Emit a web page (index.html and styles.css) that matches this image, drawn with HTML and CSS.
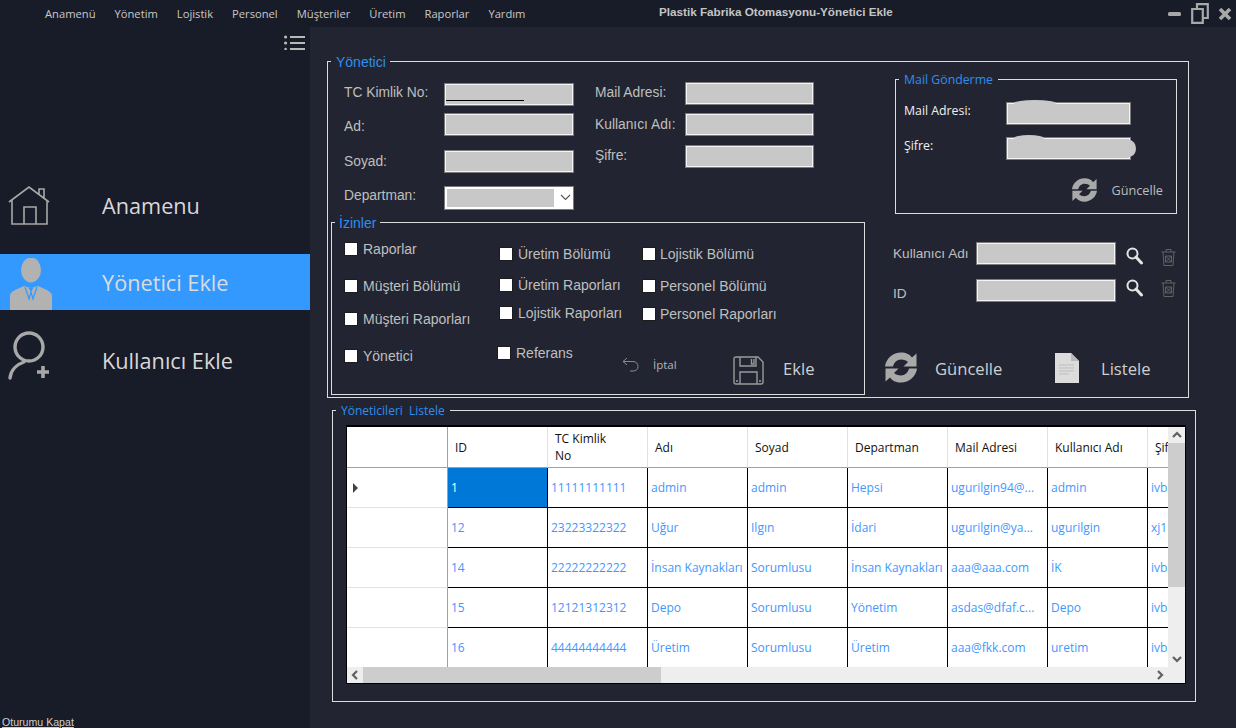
FILE: index.html
```html
<!DOCTYPE html>
<html lang="tr">
<head>
<meta charset="utf-8">
<title>Plastik Fabrika Otomasyonu-Yönetici Ekle</title>
<link rel="stylesheet" href="styles.css">
</head>
<body>
<div class="app">
  <header class="topbar">
    <nav class="menu">
      <span>Anamenü</span><span>Yönetim</span><span>Lojistik</span><span>Personel</span><span>Müşteriler</span><span>Üretim</span><span>Raporlar</span><span>Yardım</span>
    </nav>
    <div class="title">Plastik Fabrika Otomasyonu-Yönetici Ekle</div>
    <div class="winctl">
      <svg class="min" width="13" height="6" viewBox="0 0 13 6"><rect x="0" y="1" width="13" height="4" rx="1.5" fill="#a8a8a8"/></svg>
      <svg class="res" width="18" height="21" viewBox="0 0 18 21"><path d="M6 5V1.2H16.8V15H12M1.2 6H11.8V19.8H1.2Z" fill="none" stroke="#a8a8a8" stroke-width="2.2"/></svg>
      <svg class="cls" width="14" height="14" viewBox="0 0 14 14"><path d="M2 2L12 12M12 2L2 12" stroke="#a8a8a8" stroke-width="3.6"/></svg>
    </div>
  </header>

  <aside class="sidebar">
    <div class="burger">
      <svg width="21" height="15" viewBox="0 0 21 15"><g fill="#b8b8b8"><circle cx="1.6" cy="2" r="1.6"/><circle cx="1.6" cy="8" r="1.6"/><circle cx="1.6" cy="14" r="1.3"/><rect x="6" y="1" width="15" height="2"/><rect x="6" y="7" width="15" height="2"/><rect x="6" y="13" width="15" height="2"/></g></svg>
    </div>
    <a class="nav nav-home">
      <svg class="nav-ico" width="44" height="42" viewBox="0 0 44 42"><path d="M1 17L21 2L41 17M4 15V39H39V15M16 39V22H28V39M31 9V4H36V13" fill="none" stroke="#a8a8a8" stroke-width="1.6"/></svg>
      <span>Anamenu</span>
    </a>
    <a class="nav nav-active">
      <svg class="nav-ico" width="44" height="52" viewBox="0 0 44 52"><g fill="#b2b2b2"><ellipse cx="21" cy="12" rx="10" ry="12.5"/><path d="M0 52V38C0 33 6 32 14 28L21 30L28 28C36 32 42 33 42 38V52Z"/></g><path d="M15 29L19 41L21 34L23 41L27 29" fill="none" stroke="#39f" stroke-width="1.2"/><path d="M18.500 29.500H23.500L21 34Z" fill="#39f"/></svg>
      <span>Yönetici Ekle</span>
    </a>
    <a class="nav nav-user">
      <svg class="nav-ico" width="44" height="50" viewBox="0 0 44 50"><g fill="none" stroke="#a8a8a8" stroke-linecap="round"><circle cx="21" cy="16" r="14" stroke-width="3.4"/><path d="M2 47C3 38 10 33 16 31" stroke-width="3.400"/><path d="M29 41H41M35 35V47" stroke-width="3.600" stroke-linecap="butt"/></g></svg>
      <span>Kullanıcı Ekle</span>
    </a>
    <a class="logout">Oturumu Kapat</a>
  </aside>

  <main class="main">
    <section class="group g-admin">
      <div class="legend lg-admin">Yönetici</div>
      <div class="admin-left">
        <div class="personal">
          <div class="pcol pcol-a">
            <div class="field"><label class="lbl-a up4">TC Kimlik No:</label><input class="inp w130 tc"></div>
            <div class="field mt7"><label class="lbl-a down3">Ad:</label><input class="inp w130"></div>
            <div class="field mt14"><label class="lbl-a">Soyad:</label><input class="inp w130"></div>
            <div class="field mt13"><label class="lbl-a up4">Departman:</label>
              <div class="select"><span class="select-fill"></span><svg width="11" height="7" viewBox="0 0 11 7"><path d="M1 1L5.500 5.500L10 1" fill="none" stroke="#555" stroke-width="1.100"/></svg></div>
            </div>
          </div>
          <div class="pcol pcol-b">
            <div class="field"><label class="lbl-b up2">Mail Adresi:</label><input class="inp w129"></div>
            <div class="field mt8"><label class="lbl-b">Kullanıcı Adı:</label><input class="inp w129"></div>
            <div class="field mt9"><label class="lbl-b up2">Şifre:</label><input class="inp w129"></div>
          </div>
        </div>

        <section class="group g-perm">
          <div class="legend lg-perm">İzinler</div>
          <div class="pc pc1">
            <label class="chk"><input type="checkbox">Raporlar</label>
            <label class="chk mt21"><input type="checkbox">Müşteri Bölümü</label>
            <label class="chk mt17"><input type="checkbox">Müşteri Raporları</label>
            <label class="chk mt21"><input type="checkbox">Yönetici</label>
          </div>
          <div class="pc pc2">
            <label class="chk"><input type="checkbox">Üretim Bölümü</label>
            <label class="chk mt15"><input type="checkbox">Üretim Raporları</label>
            <label class="chk mt12"><input type="checkbox">Lojistik Raporları</label>
            <label class="chk mt24 shift"><input type="checkbox">Referans</label>
          </div>
          <div class="pc pc3">
            <label class="chk in20"><input type="checkbox">Lojistik Bölümü</label>
            <label class="chk in20 mt16"><input type="checkbox">Personel Bölümü</label>
            <label class="chk in20 mt12"><input type="checkbox">Personel Raporları</label>
            <div class="actions">
              <div class="cancel">
                <svg width="17" height="15" viewBox="0 0 17 15"><path d="M5 1L1 4.500L5 8M1 4.500H11C14 4.500 16 6.500 16 9.500C16 12.500 14 14 11 14H8" fill="none" stroke="#8a8a8a" stroke-width="1"/></svg>
                <span>İptal</span>
              </div>
              <svg class="save" width="31" height="29" viewBox="0 0 31 29"><path d="M1 3Q1 1 3 1H25L30 6V26Q30 28 28 28H3Q1 28 1 26ZM7 1V10H23V1M7 28V16H24V28M18.500 3V8H21V3" fill="none" stroke="#9a9a9a" stroke-width="1.400"/><path d="M3 25H5M26 25H28" stroke="#9a9a9a" stroke-width="1.400"/></svg>
              <span class="btn-text">Ekle</span>
            </div>
          </div>
        </section>
      </div>

      <div class="admin-right">
        <section class="group g-mail">
          <div class="legend lg-mail">Mail Gönderme</div>
          <div class="mfield"><label>Mail Adresi:</label><span class="redact r1"><input class="inp w124"></span></div>
          <div class="mfield mt12"><label>Şifre:</label><span class="redact r2"><input class="inp w124"></span></div>
          <div class="mupdate">
            <svg width="25" height="26" viewBox="0 0 32 32"><use href="#sync"/></svg>
            <span>Güncelle</span>
          </div>
        </section>

        <div class="sfield s1">
          <label>Kullanıcı Adı</label><input class="inp w139">
          <svg class="search" width="17" height="18" viewBox="0 0 17 18"><use href="#mag"/></svg>
          <svg class="trash" width="15" height="18" viewBox="0 0 15 18"><use href="#bin"/></svg>
        </div>
        <div class="sfield s2">
          <label>ID</label><input class="inp w139">
          <svg class="search" width="17" height="18" viewBox="0 0 17 18"><use href="#mag"/></svg>
          <svg class="trash" width="15" height="18" viewBox="0 0 15 18"><use href="#bin"/></svg>
        </div>

        <div class="bigbtns">
          <svg width="32" height="33" viewBox="0 0 32 32"><use href="#sync"/></svg>
          <span class="btn-text bt1">Güncelle</span>
          <svg class="docico" width="24" height="30" viewBox="0 0 24 30"><path d="M0 0H16L24 8V30H0Z" fill="#dcdcdc"/><path d="M16 0L24 8H16Z" fill="#b9b9b9"/><path d="M4 12H19M4 15H19M4 18H19M4 21H14" stroke="#bdbdbd" stroke-width="1"/></svg>
          <span class="btn-text bt2">Listele</span>
        </div>
      </div>
    </section>

    <section class="group g-list">
      <div class="legend lg-list">Yöneticileri&nbsp; Listele</div>
      <div class="grid">
        <div class="grid-top">
          <div class="viewport">
            <table class="dgv">
              <thead>
                <tr><th class="rh"></th><th>ID</th><th>TC Kimlik<br>No</th><th>Adı</th><th>Soyad</th><th>Departman</th><th>Mail Adresi</th><th>Kullanıcı Adı</th><th>Şifre</th></tr>
              </thead>
              <tbody>
                <tr><td class="rh"><span class="caret"></span></td><td class="sel">1</td><td>11111111111</td><td>admin</td><td>admin</td><td>Hepsi</td><td>ugurilgin94@...</td><td>admin</td><td>ivbk</td></tr>
                <tr><td class="rh"></td><td>12</td><td>23223322322</td><td>Uğur</td><td>Ilgın</td><td>İdari</td><td>ugurilgin@ya...</td><td>ugurilgin</td><td>xj1k</td></tr>
                <tr><td class="rh"></td><td>14</td><td>22222222222</td><td>İnsan Kaynakları</td><td>Sorumlusu</td><td>İnsan Kaynakları</td><td>aaa@aaa.com</td><td>İK</td><td>ivbk</td></tr>
                <tr><td class="rh"></td><td>15</td><td>12121312312</td><td>Depo</td><td>Sorumlusu</td><td>Yönetim</td><td>asdas@dfaf.c...</td><td>Depo</td><td>ivbk</td></tr>
                <tr><td class="rh"></td><td>16</td><td>44444444444</td><td>Üretim</td><td>Sorumlusu</td><td>Üretim</td><td>aaa@fkk.com</td><td>uretim</td><td>ivbk</td></tr>
              </tbody>
            </table>
          </div>
          <div class="vbar">
            <svg class="arr" width="16" height="16" viewBox="0 0 16 16"><path d="M4 10L8 6L12 10" fill="none" stroke="#606060" stroke-width="2.200"/></svg>
            <div class="vthumb"></div>
            <svg class="arr arr-end" width="16" height="16" viewBox="0 0 16 16"><path d="M4 6L8 10L12 6" fill="none" stroke="#606060" stroke-width="2.200"/></svg>
          </div>
        </div>
        <div class="hbar">
          <svg class="arr" width="16" height="16" viewBox="0 0 16 16"><path d="M10 4L6 8L10 12" fill="none" stroke="#606060" stroke-width="2.200"/></svg>
          <div class="hthumb"></div>
          <svg class="arr arr-end" width="16" height="16" viewBox="0 0 16 16"><path d="M6 4L10 8L6 12" fill="none" stroke="#606060" stroke-width="2.200"/></svg>
        </div>
      </div>
    </section>
  </main>
</div>

<svg class="defs" width="0" height="0">
  <defs>
    <g id="sync" fill="#a9a9a9">
      <path d="M0 15C1 7 8 1 16 1C21 1 25 3 27 6L31.500 2V15H18.500L23 10.500C21.500 9 19 8 16 8C12 8 9 11 8 15Z"/>
      <path d="M32 17C31 25 24 31 16 31C11 31 7 29 5 26L0.500 30V17H13.500L9 21.500C10.500 23 13 24 16 24C20 24 23 21 24 17Z"/>
    </g>
    <g id="mag">
      <circle cx="6.500" cy="6.500" r="5" fill="none" stroke="#e4e4e4" stroke-width="2"/>
      <path d="M10 10L15.500 16" stroke="#e4e4e4" stroke-width="3" stroke-linecap="round"/>
    </g>
    <g id="bin" fill="none" stroke="#626262" stroke-width="1">
      <path d="M0.500 4H14.500M5 4V1.500H10V4M2 4L3 17.500H12L13 4M4.500 8H10.500V14H4.500ZM4.500 8L10.500 14M10.500 8L4.500 14"/>
    </g>
  </defs>
</svg>
</body>
</html>
```
FILE: styles.css
```css
* { box-sizing: border-box; }
html, body { margin: 0; padding: 0; }
body { width: 1236px; height: 728px; overflow: hidden; background: #222531; font-family: "Liberation Sans", Arial, sans-serif; }
.defs { position: absolute; }
svg { display: block; flex: none; }

.app { display: grid; grid-template-columns: 310px 926px; grid-template-rows: 27px 701px; width: 1236px; height: 728px; }

/* top bar */
.topbar { grid-column: 1 / 3; display: flex; align-items: center; background: #181b28; position: relative; }
.menu { display: flex; gap: 19px; margin-left: 45px; font: 11.2px/15px "Open Sans", sans-serif; color: #c9c9c9; width: 614px; margin-top: -1px; }
.title { font: bold 11.7px/14px "Liberation Sans", sans-serif; color: #c4c4c4; width: 509px; margin-top: -3px; white-space: nowrap; }
.winctl { display: flex; align-items: center; }
.res { margin-left: 10px; }
.cls { margin-left: 9px; }

/* sidebar */
.sidebar { background: #181b28; display: flex; flex-direction: column; }
.burger { display: flex; justify-content: flex-end; padding: 8px 5px 0 0; height: 143px; }
.nav { display: flex; align-items: center; font: 21.7px/30px "Open Sans", sans-serif; color: #d8d8d8; padding-left: 8px; }
.nav span { margin-left: 50px; }
.nav-home { height: 84px; padding-bottom: 12px; }
.nav-active { height: 56px; background: #39f; color: #dcdcdc; align-items: flex-end; padding-left: 10px; }
.nav-active span { align-self: center; margin-left: 48px; padding-top: 2px; }
.nav-user { height: 78px; padding-top: 24px; }
.nav-user .nav-ico { margin-top: -10px; }
.logout { margin-top: auto; margin-left: 2px; font: 10.6px/12px "Liberation Sans", sans-serif; color: #cfcfcf; text-decoration: underline; height: 12px; width: 72px; white-space: nowrap; }

/* main */
.main { padding: 34px 0 0 17px; }
.group { position: relative; border: 1px solid #dcdcdc; }
.legend { position: absolute; left: 4px; top: -9px; padding: 0 4px; background: #222531; color: #2e8eee; white-space: nowrap; }
.lg-admin { font: 14px/16px "Liberation Sans", sans-serif; top: -8px; left: 3px; padding: 0 4px 0 5px; }
.lg-perm { font: 14px/16px "Liberation Sans", sans-serif; top: -8px; left: 3px; padding: 0 4px; }
.lg-mail { font: 12.3px/18px "Open Sans", sans-serif; left: 3px; padding: 0 5px; }
.lg-list { font: 12px/16px "Open Sans", sans-serif; top: -8px; left: 3px; padding: 0 5px; }

.g-admin { display: flex; width: 862px; height: 337px; }
.admin-left { margin-left: 3px; width: 534px; }
.personal { display: flex; height: 160px; padding: 20px 0 0 13px; }
.pcol-a { width: 251px; padding-top: 1px; }
.field { display: flex; align-items: center; height: 23px; font-size: 13.8px; color: #bfbfbf; }
.lbl-a { width: 100px; }
.lbl-b { width: 90px; white-space: nowrap; }
.up2 { padding-bottom: 2px; }
.up4 { padding-bottom: 4px; }
.down3 { padding-top: 3px; }
.mt7 { margin-top: 7px; }
.mt8 { margin-top: 8px; }
.mt9 { margin-top: 9px; }
.mt12 { margin-top: 12px; }
.mt13 { margin-top: 13px; }
.mt14 { margin-top: 14px; }
.mt15 { margin-top: 15px; }
.mt16 { margin-top: 16px; }
.mt17 { margin-top: 17px; }
.mt21 { margin-top: 21px; }
.mt24 { margin-top: 24px; }

.inp { display: block; height: 23px; margin: 0; padding: 0; background: #c8c8c8; border: 1px solid #7a7a7a; box-shadow: inset 0 0 0 1px #f4f4f4; border-radius: 0; outline: 0; }
.w130 { width: 130px; }
.w129 { width: 129px; }
.w124 { width: 125px; }
.w139 { width: 140px; }
.tc { background-image: linear-gradient(#000, #000); background-repeat: no-repeat; background-size: 78px 1px; background-position: 1px 16px; }
.select { display: flex; align-items: center; width: 130px; height: 24px; background: #fff; border: 1px solid #7a7a7a; padding: 1px 0 1px 2px; }
.select-fill { width: 107px; height: 18px; background: #c8c8c8; }
.select svg { margin-left: 6px; }

/* permissions */
.g-perm { display: flex; width: 534px; height: 173px; padding-left: 12px; }
.pc { padding-top: 18px; }
.pc1 { width: 155px; }
.pc2 { width: 123px; padding-top: 23px; }
.pc3 { width: 242px; padding-top: 23px; }
.chk { display: flex; align-items: center; height: 16px; font-size: 14px; color: #bfbfbf; white-space: nowrap; }
.chk input { appearance: none; -webkit-appearance: none; width: 14px; height: 14px; margin: 0 5px 0 0; background: #fff; border: 1px solid #1c1c1c; border-radius: 0; flex: none; }
.in20 { margin-left: 20px; }
.pc3 .chk input { margin-right: 4px; }
.pc2 .chk.shift input { margin-left: -2px; }
.actions { display: flex; align-items: center; margin-top: 34px; }
.cancel { display: flex; align-items: center; gap: 14px; font: 11.5px/14px "Open Sans", sans-serif; color: #b4b4b4; width: 111px; padding-bottom: 12px; }
.btn-text { font: 16.6px/22px "Open Sans", sans-serif; color: #cfcfcf; }
.actions .btn-text { margin-left: 19px; padding-bottom: 3px; }

/* right column */
.admin-right { margin-left: 20px; width: 300px; padding-top: 17px; }
.g-mail { width: 282px; height: 135px; margin-left: 10px; padding: 22px 0 0 8px; }
.mfield { display: flex; align-items: center; height: 23px; font: 12.3px/16px "Open Sans", sans-serif; color: #f0f0f0; }
.mfield label { width: 102px; padding-bottom: 6px; }
.redact { position: relative; display: block; }
.redact::before { content: ""; position: absolute; border-radius: 50%; background: #c8c8c8; }
.r1::before { left: 8px; top: -2px; width: 42px; height: 6px; }
.r2::before { left: 8px; top: -2px; width: 30px; height: 6px; }
.r2::after { content: ""; position: absolute; right: -5px; top: 3px; width: 14px; height: 17px; border-radius: 50%; background: #c8c8c8; }
.mupdate { display: flex; align-items: center; justify-content: flex-end; gap: 14px; margin-top: 17px; padding-right: 13px; font: 12.7px/18px "Open Sans", sans-serif; color: #bdbdbd; }
.sfield { display: flex; align-items: center; height: 23px; padding-left: 8px; font: 13.6px/16px "Liberation Sans", sans-serif; color: #bfbfbf; }
.sfield label { width: 83px; white-space: nowrap; }
.s1 { margin-top: 28px; }
.s2 { margin-top: 14px; }
.s2 label { padding-top: 6px; }
.search { margin-left: 10px; }
.s1 .search { margin-top: 5px; }
.s2 .search { margin-top: -5px; }
.trash { margin-left: 18px; }
.s1 .trash { margin-top: 6px; }
.s2 .trash { margin-top: -5px; }
.bigbtns { display: flex; align-items: center; margin-top: 49px; }
.bigbtns .btn-text { margin-top: 3px; }
.bt1 { margin-left: 18px; width: 120px; }
.docico { margin-right: 22px; }

/* list */
.g-list { width: 864px; height: 292px; margin: 12px 0 0 5px; padding: 14px 0 0 13px; }
.grid { width: 840px; height: 259px; background: #eee; border: 1px solid #000; border-width: 2px 1px 2px 1px; display: flex; flex-direction: column; }
.grid-top { display: flex; height: 240px; }
.viewport { width: 821px; height: 240px; overflow: hidden; background: #fff; }
.dgv { border-collapse: separate; border-spacing: 0; table-layout: fixed; width: 901px; font: 12px/17px "Open Sans", sans-serif; }
.dgv th:first-child, .dgv td:first-child { width: 101px; }
.dgv th, .dgv td { width: 100px; padding: 0; overflow: hidden; white-space: nowrap; }
.dgv th { height: 41px; font-weight: 400; text-align: left; color: #111; padding: 0 0 0 7px; border-right: 1px solid #e2e2e2; border-bottom: 1px solid #a0a0a0; }
.dgv td { height: 40px; color: #3f97ff; padding-left: 3px; border-right: 1px solid #000; border-bottom: 1px solid #000; }
.dgv .rh { padding: 0; border-right: 1px solid #a0a0a0; border-bottom: 1px solid #e2e2e2; }
.dgv th.rh { border-bottom: 1px solid #a0a0a0; border-right: 1px solid #a0a0a0; }
.dgv .sel { background: #0078d7; color: #fff; }
.caret { display: block; width: 0; height: 0; margin: 0 0 0 6px; border-left: 5px solid #444; border-top: 5px solid transparent; border-bottom: 5px solid transparent; }
.vbar { width: 17px; height: 240px; background: #eee; display: flex; flex-direction: column; }
.vthumb { height: 144px; background: #cdcdcd; }
.arr-end { margin-top: auto; }
.vbar .arr { margin-left: 1px; }
.hbar { display: flex; height: 16px; background: #eee; }
.hthumb { width: 298px; background: #cdcdcd; }
.hbar .arr-end { margin-left: auto; margin-right: 17px; margin-top: 0; }
```
